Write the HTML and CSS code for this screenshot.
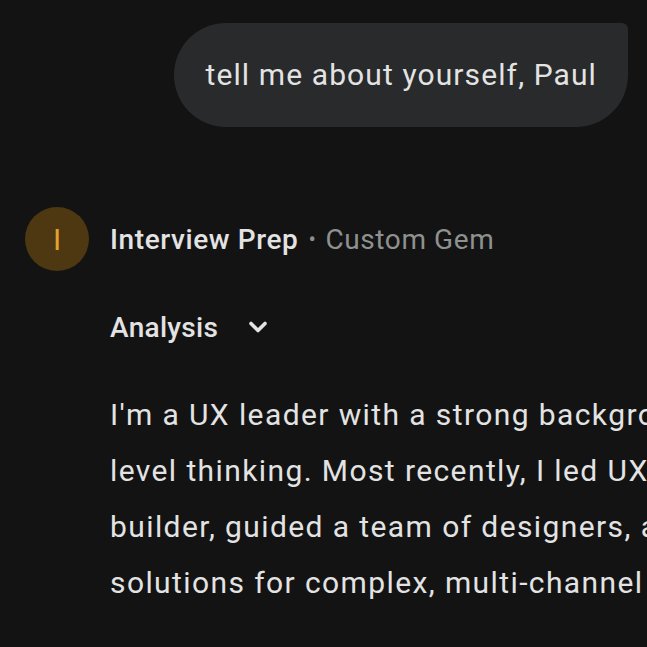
FILE: index.html
```html
<!DOCTYPE html>
<html>
<head>
<meta charset="utf-8">
<link rel="stylesheet" href="styles.css">
</head>
<body>
<div class="page">
  <div class="user-row">
    <div class="bubble">tell me about yourself, Paul</div>
  </div>
  <div class="response">
    <div class="resp-head">
      <div class="avatar"><span>I</span></div>
      <div class="title"><span class="name">Interview Prep</span><span class="dot">•</span><span class="gem">Custom Gem</span></div>
    </div>
    <div class="body">
      <div class="analysis">
        <span>Analysis</span>
        <svg class="chev" width="26" height="26" viewBox="0 0 26 26"><path d="M6 9.5 L13 16.5 L20 9.5" fill="none" stroke="#e3e3e3" stroke-width="3.6" stroke-linecap="round" stroke-linejoin="round"/></svg>
      </div>
      <p class="text">I'm a UX leader with a strong background in design and systems-<br>level thinking. Most recently, I led UX and design for a workflow<br>builder, guided a team of designers, and delivered scalable<br>solutions for complex, multi-channel experiences.</p>
    </div>
  </div>
</div>
</body>
</html>
```

FILE: styles.css
```css
html, body {
  margin: 0;
  padding: 0;
  background: #131314;
  overflow: hidden;
}
.page {
  width: 647px;
  height: 647px;
  overflow: hidden;
  font-family: Roboto, "Noto Sans", sans-serif;
  color: #e3e3e3;
}
.user-row {
  display: flex;
  justify-content: flex-end;
  padding: 23px 19px 0 0;
}
.bubble {
  background: #282a2c;
  border-radius: 52px 6px 52px 52px;
  padding: 32px 31px 32px 32px;
  font-size: 30px;
  letter-spacing: 1.1px;
  line-height: 40px;
  color: #e3e3e3;
  white-space: nowrap;
}
.response {
  padding: 80px 0 0 25px;
}
.resp-head {
  display: flex;
  align-items: center;
  gap: 21px;
}
.avatar {
  width: 64px;
  height: 64px;
  border-radius: 50%;
  background: #4d3811;
  display: flex;
  align-items: center;
  justify-content: center;
  flex-shrink: 0;
}
.avatar span {
  color: #e6a22f;
  font-size: 30px;
  font-weight: 400;
}
.title {
  font-size: 28px;
  letter-spacing: 0.6px;
  white-space: nowrap;
  display: flex;
  align-items: center;
}
.name { color: #e3e3e3; font-weight: 500; }
.dot { color: #8e918f; font-size: 22px; margin: 0 9px 0 10px; }
.gem { color: #8e918f; }
.body {
  padding-left: 85px;
}
.analysis {
  display: flex;
  align-items: center;
  gap: 27px;
  margin-top: 36px;
  height: 40px;
  font-size: 28px;
  letter-spacing: 0.3px;
  font-weight: 500;
  color: #e3e3e3;
}
.chev { display: block; }
.text {
  margin: 40px 0 0 0;
  font-size: 30px;
  letter-spacing: 1.4px;
  line-height: 56px;
  white-space: nowrap;
  color: #e3e3e3;
}
```
